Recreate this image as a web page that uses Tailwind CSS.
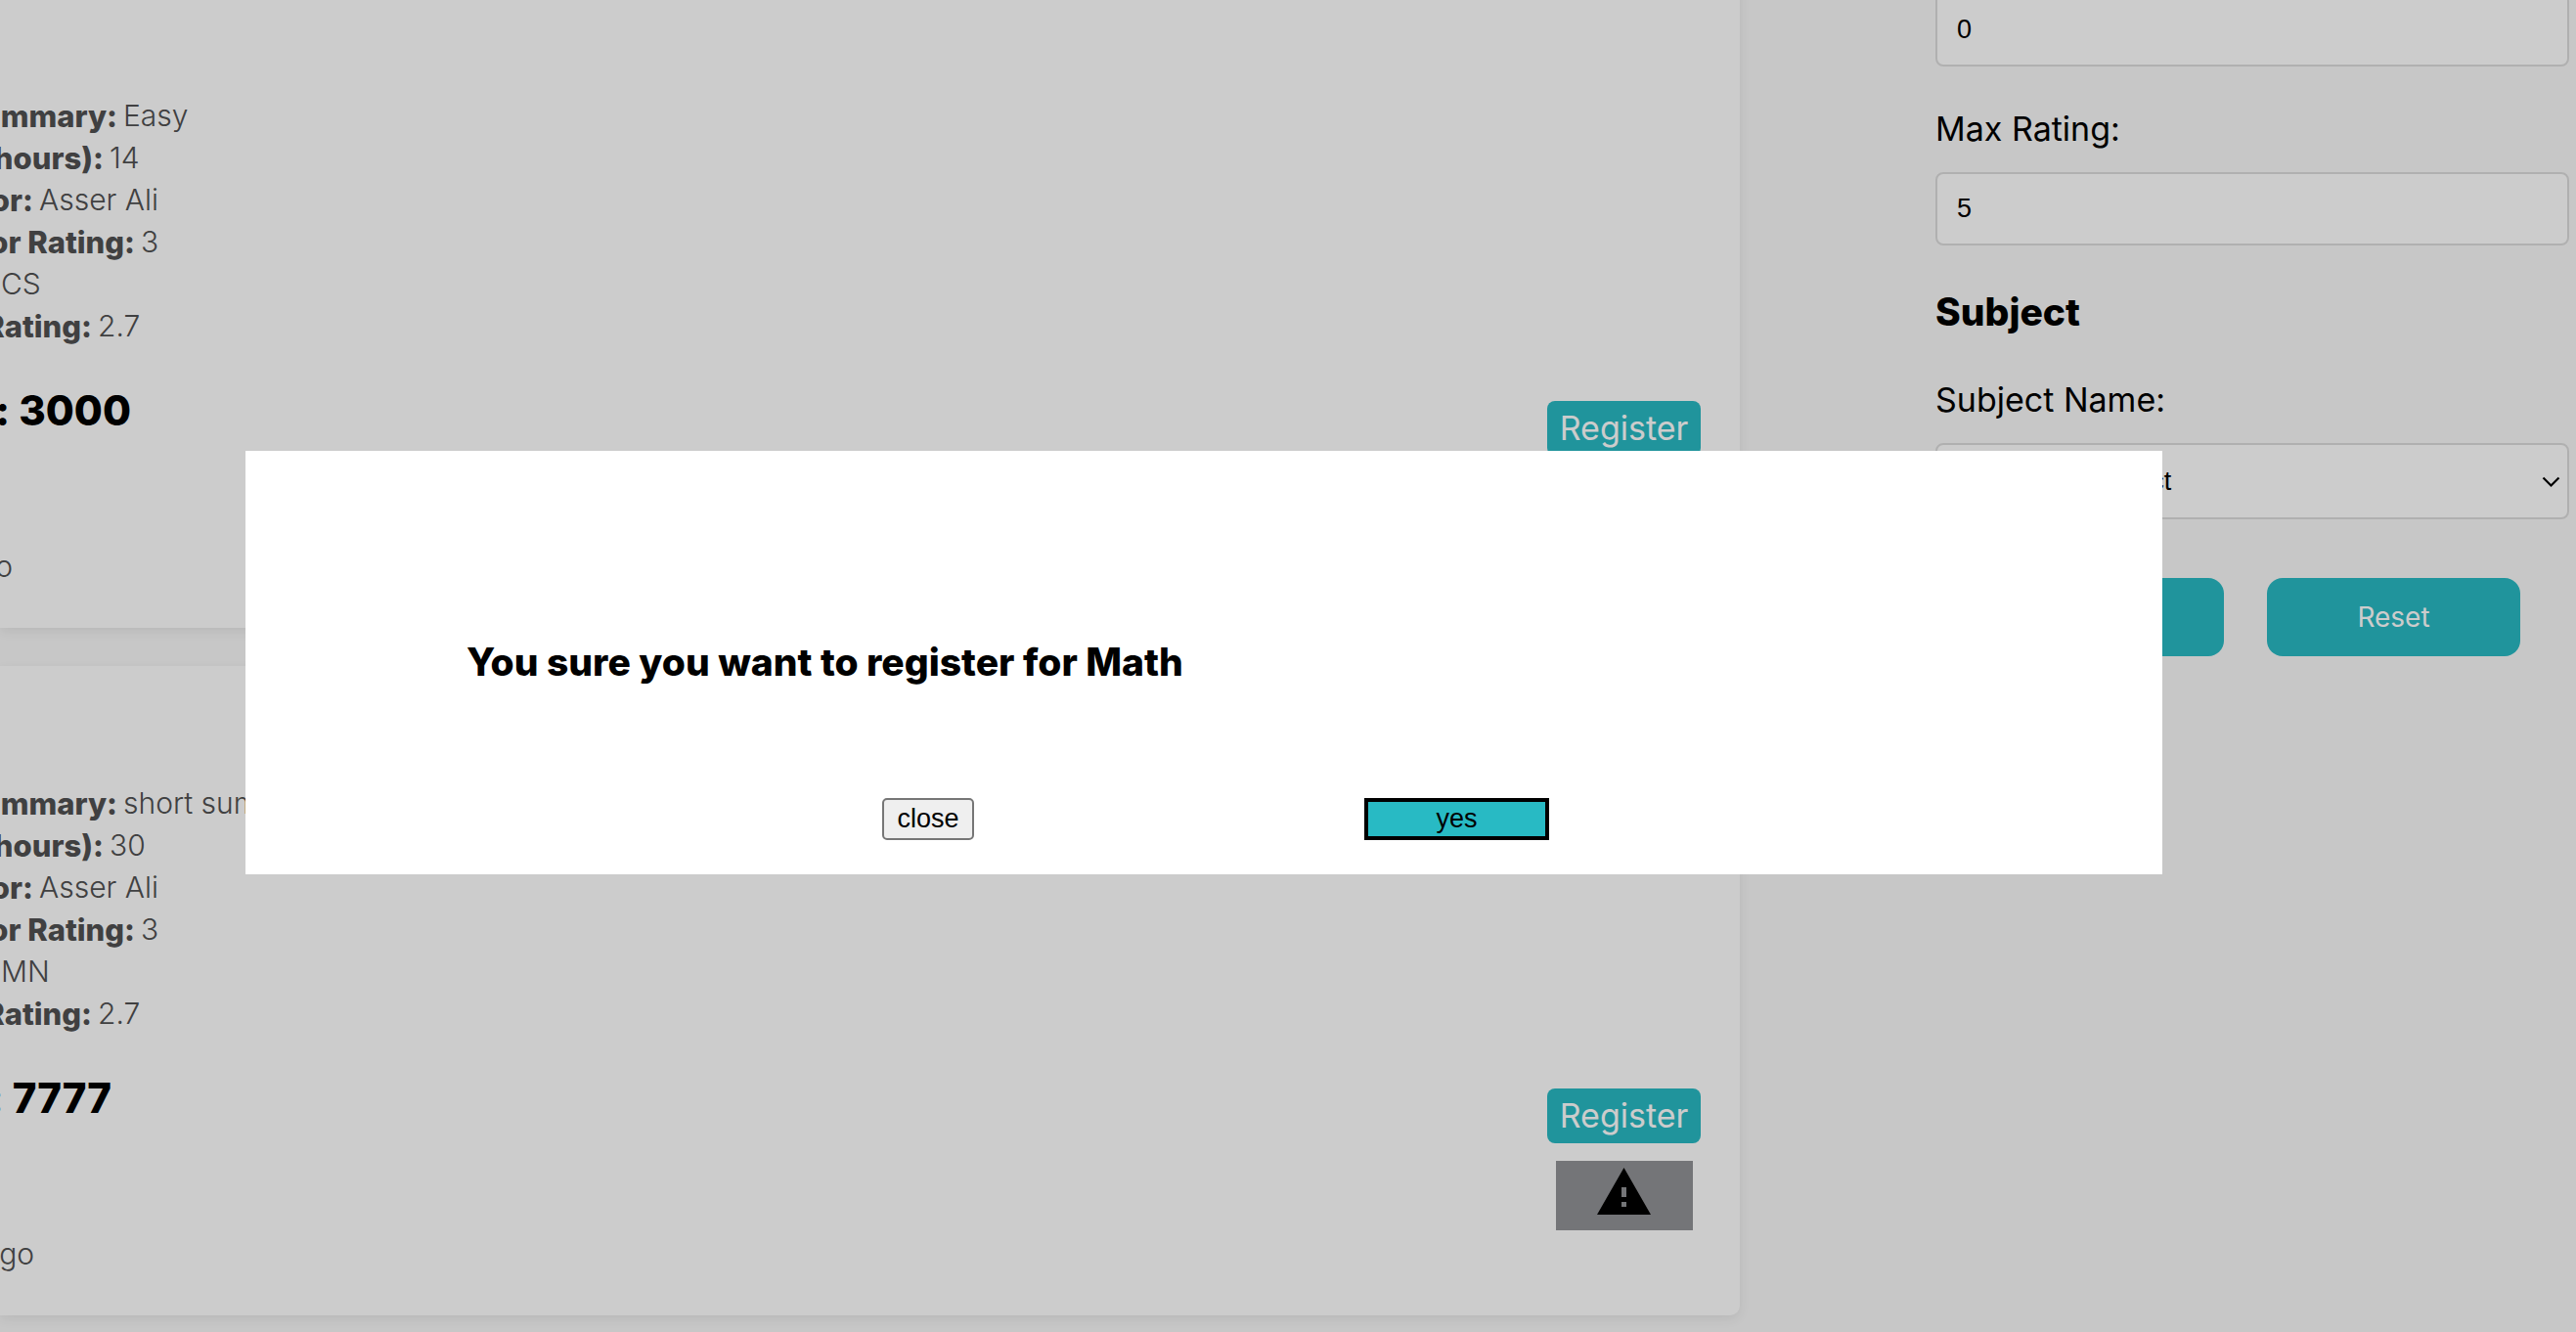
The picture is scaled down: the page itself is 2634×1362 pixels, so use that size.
<!DOCTYPE html>
<html lang="en">
<head>
<meta charset="utf-8">
<title>Courses</title>
<script src="https://cdn.jsdelivr.net/npm/@tailwindcss/browser@4"></script>
</head>
<body class="bg-[#f9f9f9] font-[Inter,sans-serif] text-black">
<div class="flex h-screen overflow-hidden">

  <!-- Course list, scrolled part of the way down -->
  <main class="-mt-[22px] flex min-w-0 flex-1 flex-col gap-[39px]">
    <article class="flex h-[664px] shrink-0 items-start justify-between rounded-r-[10px] bg-white pr-10 shadow-[0_4px_12px_rgba(0,0,0,0.07)]">
      <div class="pt-[119px] text-[30px] leading-[43px] font-light text-[#505152]">
        <p class="flex gap-1.5"><b class="flex w-[120px] justify-end text-[31px] font-extrabold">Summary:</b>Easy</p>
        <p class="flex gap-1.5"><b class="flex w-[106px] justify-end text-[31px] font-extrabold">(hours):</b>14</p>
        <p class="flex gap-1.5"><b class="flex w-[34px] justify-end text-[31px] font-extrabold">Instructor:</b>Asser Ali</p>
        <p class="flex gap-1.5"><b class="flex w-[138px] justify-end text-[31px] font-extrabold whitespace-nowrap">Instructor Rating:</b>3</p>
        <p class="pl-px">CS</p>
        <p class="flex gap-1.5"><b class="flex w-[94px] justify-end text-[31px] font-extrabold">Rating:</b>2.7</p>
        <h2 class="mt-[31px] flex w-[134px] justify-end text-[42px] leading-[67px] font-extrabold whitespace-nowrap text-black">Price: 3000</h2>
        <p class="mt-[105px] flex w-[13px] justify-end">ago</p>
      </div>
      <div class="flex flex-col items-center gap-[18px] pt-[432px]">
        <button class="h-14 w-[157px] rounded-lg bg-[#28bac4] text-[34px] leading-none text-white">Register</button>
      </div>
    </article>

    <article class="flex h-[664px] shrink-0 items-start justify-between rounded-r-[10px] bg-white pr-10 shadow-[0_4px_12px_rgba(0,0,0,0.07)]">
      <div class="pt-[119px] text-[30px] leading-[43px] font-light text-[#505152]">
        <p class="flex gap-1.5 whitespace-nowrap"><b class="flex w-[120px] justify-end text-[31px] font-extrabold">Summary:</b>short summary</p>
        <p class="flex gap-1.5"><b class="flex w-[106px] justify-end text-[31px] font-extrabold">(hours):</b>30</p>
        <p class="flex gap-1.5"><b class="flex w-[34px] justify-end text-[31px] font-extrabold">Instructor:</b>Asser Ali</p>
        <p class="flex gap-1.5"><b class="flex w-[138px] justify-end text-[31px] font-extrabold whitespace-nowrap">Instructor Rating:</b>3</p>
        <p class="pl-px">MN</p>
        <p class="flex gap-1.5"><b class="flex w-[94px] justify-end text-[31px] font-extrabold">Rating:</b>2.7</p>
        <h2 class="mt-[31px] flex w-[114px] justify-end text-[42px] leading-[67px] font-extrabold whitespace-nowrap text-black">Price: 7777</h2>
        <p class="mt-[105px] flex w-[35px] justify-end">ago</p>
      </div>
      <div class="flex flex-col items-center gap-[18px] pt-[432px]">
        <button class="h-14 w-[157px] rounded-lg bg-[#28bac4] text-[34px] leading-none text-white">Register</button>
        <button aria-label="Report a problem" class="flex h-[71px] w-[140px] justify-center bg-[#929396] pt-[7px]">
          <svg class="h-12 w-[55px]" viewBox="0 0 55 48"><path fill="#000" fill-rule="evenodd" d="M27.500 0 55 48H0ZM25 20v10h5V20ZM25 35v5h5v-5Z"/></svg>
        </button>
      </div>
    </article>
  </main>

  <!-- Filters -->
  <aside class="mr-[7px] ml-[200px] -mt-[7px] w-[648px] shrink-0">
    <input aria-label="Min Rating" value="0" class="block h-[75px] w-full rounded-lg border-2 border-[#ddd] bg-white px-5 font-[Liberation_Sans,sans-serif] text-[27px]">
    <label for="max" class="mt-[38px] block text-[34px] leading-[51px]">Max Rating:</label>
    <input id="max" value="5" class="mt-[19px] block h-[75px] w-full rounded-lg border-2 border-[#ddd] bg-white px-5 font-[Liberation_Sans,sans-serif] text-[27px]">
    <h3 class="mt-[39px] text-[39px] leading-[58px] font-extrabold">Subject</h3>
    <label for="subject" class="mt-[35px] block text-[34px] leading-[51px]">Subject Name:</label>
    <div class="relative mt-[19px]">
      <select id="subject" class="block h-[78px] w-full appearance-none rounded-lg border-2 border-[#ddd] bg-white px-[26px] font-[Liberation_Sans,sans-serif] text-[27px]"><option>Choose a Subject</option></select>
      <svg class="pointer-events-none absolute top-[34px] right-[9px] h-3 w-[19px]" viewBox="0 0 19 12"><path fill="none" stroke="#000" stroke-width="2.200" d="m1.500 1.500 8 8 8-8"/></svg>
    </div>
    <div class="mt-[60px] flex gap-11 pr-[50px] pl-9">
      <button class="h-20 flex-1 rounded-2xl bg-[#28bac4] text-[28px] text-white">Filter</button>
      <button class="h-20 flex-1 rounded-2xl bg-[#28bac4] text-[28px] text-white">Reset</button>
    </div>
  </aside>
</div>

<!-- Confirmation dialog over the dimmed page -->
<div class="fixed inset-0 bg-black/20 pt-[461px] pr-[423px] pl-[251px]">
  <section role="dialog" aria-labelledby="ask" class="h-[433px] bg-white pt-[187px]">
    <h2 id="ask" class="pl-[226px] text-[39px] leading-[58px] font-extrabold">You sure you want to register for Math</h2>
    <div class="mt-[110px] flex gap-[399px] pl-[651px] font-[Liberation_Sans,sans-serif] text-[27px] leading-none">
      <button class="h-[43px] w-[94px] rounded-[5px] border-2 border-[#767676] bg-[#efefef]">close</button>
      <button class="h-[43px] w-[189px] border-4 border-black bg-[#28bac4]">yes</button>
    </div>
  </section>
</div>
</body>
</html>
